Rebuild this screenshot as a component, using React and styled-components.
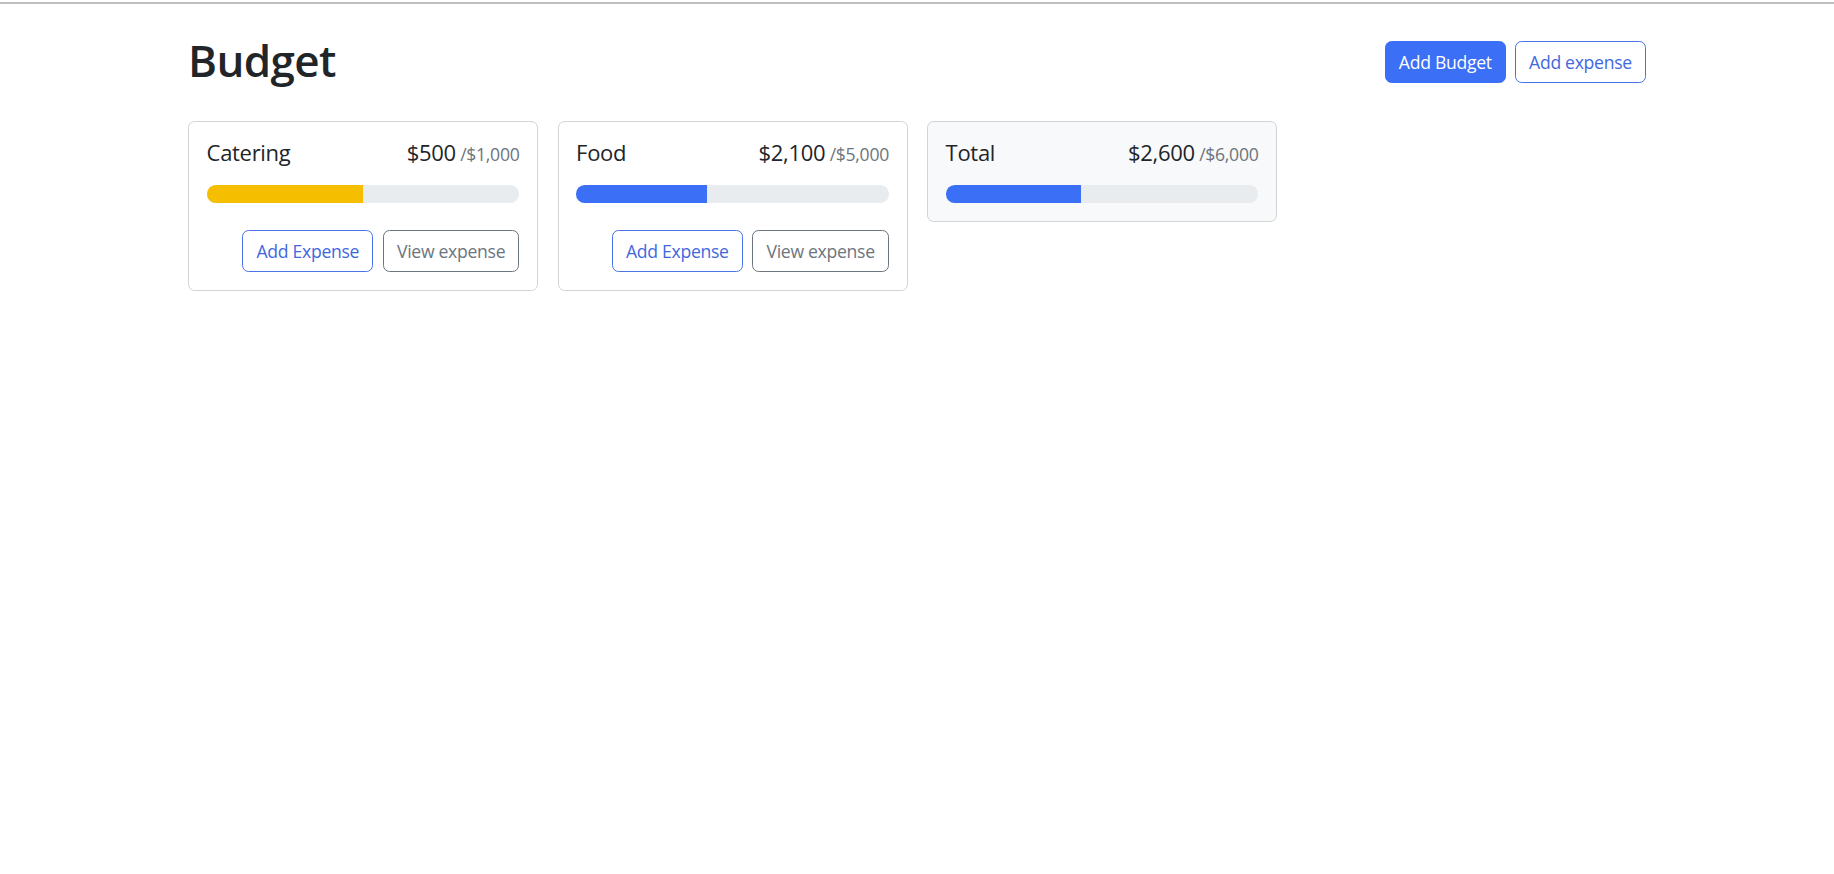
import React from 'react';
import styled, { createGlobalStyle } from 'styled-components';

const budgets = [
  { id: 1, name: 'Catering', amount: 500, max: 1000, color: '#f5bf00' },
  { id: 2, name: 'Food', amount: 2100, max: 5000, color: '#3b6ff6' },
];

const fmt = (n) => '$' + n.toLocaleString('en-US');

const GlobalStyle = createGlobalStyle`
  html, body {
    margin: 0;
    padding: 0;
    background: #fff;
  }
  body {
    font-family: "Segoe UI", "Open Sans", "Noto Sans", sans-serif;
    color: #212529;
    font-size: 17.6px;
    line-height: 1.5;
  }
  * { box-sizing: border-box; }
`;

const TopRule = styled.div`
  margin-top: 2px;
  height: 2px;
  background: #bfbfbf;
`;

const Container = styled.main`
  width: 1458px;
  margin: 0 auto;
  padding-top: 31.6px;
`;

const Header = styled.header`
  display: flex;
  align-items: center;
  gap: 9px;
  margin-bottom: 32.6px;
`;

const Title = styled.h1`
  margin: 0 auto 0 0;
  padding-bottom: 4px;
  font-size: 44px;
  font-weight: 600;
  line-height: 48.8px;
  letter-spacing: -0.6px;
`;

const Button = styled.button`
  font-family: inherit;
  font-size: 17.6px;
  line-height: 26.4px;
  padding: 6.6px 13.2px;
  border-radius: 6.6px;
  border: 1px solid ${p => p.$color};
  background: ${p => (p.$solid ? p.$color : '#fff')};
  color: ${p => (p.$solid ? '#fff' : p.$text || p.$color)};
  cursor: pointer;
  white-space: nowrap;
  letter-spacing: -0.3px;
`;

const Grid = styled.div`
  display: grid;
  grid-template-columns: repeat(auto-fill, 350px);
  gap: 19.5px;
  align-items: start;
`;

const Card = styled.div`
  border: 1px solid #d2d3d4;
  border-radius: 6.6px;
  background: ${p => (p.$light ? '#f8f9fa' : '#fff')};
  padding: 17.6px 17.6px 18.6px;
`;

const CardHead = styled.div`
  display: flex;
  justify-content: space-between;
  align-items: baseline;
  font-size: 22px;
  line-height: 25px;
  margin-bottom: 18.4px;
`;

const Name = styled.span`
  letter-spacing: -0.3px;
`;

const Amount = styled.span`
  display: flex;
  align-items: baseline;
  letter-spacing: -0.3px;
`;

const Max = styled.span`
  font-size: 17.6px;
  color: #6c757d;
  margin-left: 4.4px;
  letter-spacing: -0.3px;
`;

const Track = styled.div`
  height: 17.6px;
  border-radius: 8.8px;
  background: #e9ecef;
  overflow: hidden;
`;

const Fill = styled.div`
  height: 100%;
  background: ${p => p.$color};
`;

const Actions = styled.div`
  display: flex;
  justify-content: flex-end;
  gap: 9.5px;
  margin-top: 27.4px;
`;

const BudgetCard = ({ name, amount, max, color, light, hideButtons }) => (
  <Card $light={light}>
    <CardHead>
      <Name>{name}</Name>
      <Amount>
        {fmt(amount)}
        <Max>/{fmt(max)}</Max>
      </Amount>
    </CardHead>
    <Track>
      <Fill $color={color} style={{ width: `${(amount / max) * 100}%` }} />
    </Track>
    {!hideButtons && (
      <Actions>
        <Button $color="#4a74e6" $text="#3f68de">Add Expense</Button>
        <Button $color="#6c757d">View expense</Button>
      </Actions>
    )}
  </Card>
);

export default function App() {
  const total = budgets.reduce((s, b) => s + b.amount, 0);
  const totalMax = budgets.reduce((s, b) => s + b.max, 0);

  return (
    <>
      <GlobalStyle />
      <TopRule />
      <Container>
        <Header>
          <Title>Budget</Title>
          <Button $solid $color="#3b6ff6">Add Budget</Button>
          <Button $color="#4a74e6" $text="#3f68de">Add expense</Button>
        </Header>
        <Grid>
          {budgets.map(b => (
            <BudgetCard key={b.id} {...b} />
          ))}
          <BudgetCard name="Total" amount={total} max={totalMax} color="#3b6ff6" light hideButtons />
        </Grid>
      </Container>
    </>
  );
}
